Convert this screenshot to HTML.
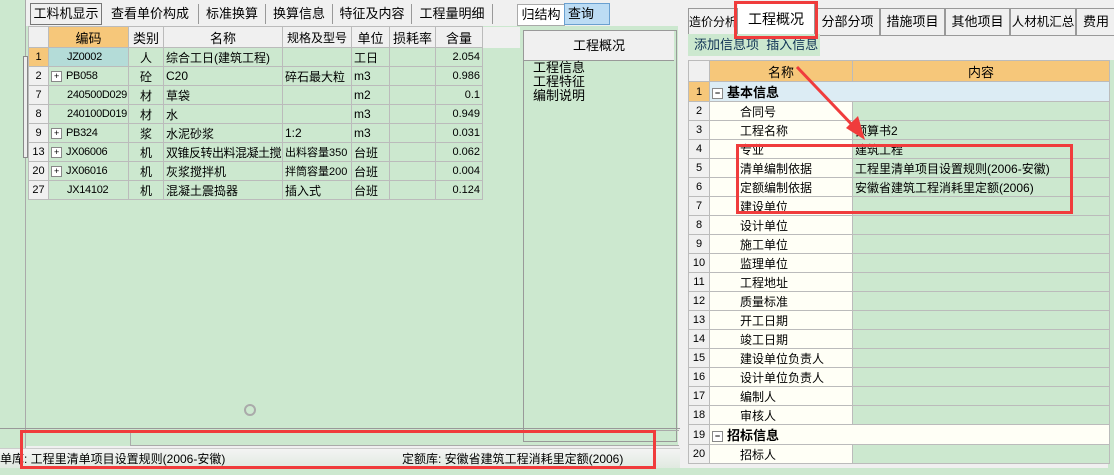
<!DOCTYPE html><html><head><meta charset="utf-8"><style>
body{margin:0;width:1114px;height:475px;overflow:hidden;background:#f0f0f0;font-family:"Liberation Sans","Noto Sans CJK SC",sans-serif;font-size:12px;position:relative}
.a{position:absolute}
.g{background:#cce8cf}
.tab{position:absolute;top:4px;height:20px;line-height:20px;font-size:13px;text-align:center;border-right:1px solid #999;background:#f0f0f0;white-space:nowrap;overflow:hidden}
table{border-collapse:collapse;position:absolute;table-layout:fixed}
td{border:1px solid #bbb;height:18px;padding:0 2px;white-space:nowrap;overflow:hidden;font-size:12px}
.hd td{background:#f0f0f0;text-align:center;height:20px;font-size:13px}
.n{background:#f0f0f0;text-align:center;font-size:11px}
.r{text-align:right;font-size:11px}
.c{font-size:11px;letter-spacing:-0.3px}
.pl{display:inline-block;width:9px;height:9px;border:1px solid #888;font-size:9px;line-height:9px;text-align:center;background:#fff;margin-right:4px;vertical-align:middle}
.rb{position:absolute;border:3px solid #f03c3c}
</style></head><body>
<div class="a g" style="left:0;top:0;width:25px;height:475px;border-right:1px solid #aaa"></div>
<div class="a g" style="left:26px;top:26px;width:494px;height:420px"></div>
<div class="tab" style="left:30px;width:70px;border:1px solid #777;top:3px">工料机显示</div>
<div class="tab" style="left:102px;width:96px">查看单价构成</div>
<div class="tab" style="left:199px;width:66px">标准换算</div>
<div class="tab" style="left:266px;width:66px">换算信息</div>
<div class="tab" style="left:333px;width:78px">特征及内容</div>
<div class="tab" style="left:412px;width:80px">工程量明细</div>
<table style="left:28px;top:26px;width:492px">
<colgroup><col style="width:20px"><col style="width:80px"><col style="width:35px"><col style="width:119px"><col style="width:69px"><col style="width:38px"><col style="width:46px"><col style="width:47px"><col style="width:38px"></colgroup>
<tr class="hd"><td></td><td style="background:#f6c77a">编码</td><td>类别</td><td>名称</td><td style="font-size:12px">规格及型号</td><td>单位</td><td>损耗率</td><td>含量</td><td style="border:none;background:#f0f0f0"></td></tr>
<tr class="g"><td class="n" style="background:#f6c77a">1</td><td class="c" style="background:#b4dcd8;padding-left:18px">JZ0002</td><td style="text-align:center">人</td><td>综合工日(建筑工程)</td><td></td><td>工日</td><td></td><td class="r">2.054</td><td style="border:none"></td></tr>
<tr class="g"><td class="n">2</td><td class="c"><span class="pl">+</span>PB058</td><td style="text-align:center">砼</td><td>C20</td><td>碎石最大粒</td><td>m3</td><td></td><td class="r">0.986</td><td style="border:none"></td></tr>
<tr class="g"><td class="n">7</td><td class="c" style="padding-left:18px">240500D029</td><td style="text-align:center">材</td><td>草袋</td><td></td><td>m2</td><td></td><td class="r">0.1</td><td style="border:none"></td></tr>
<tr class="g"><td class="n">8</td><td class="c" style="padding-left:18px">240100D019</td><td style="text-align:center">材</td><td>水</td><td></td><td>m3</td><td></td><td class="r">0.949</td><td style="border:none"></td></tr>
<tr class="g"><td class="n">9</td><td class="c"><span class="pl">+</span>PB324</td><td style="text-align:center">浆</td><td>水泥砂浆</td><td>1:2</td><td>m3</td><td></td><td class="r">0.031</td><td style="border:none"></td></tr>
<tr class="g"><td class="n">13</td><td class="c"><span class="pl">+</span>JX06006</td><td style="text-align:center">机</td><td style="letter-spacing:-0.5px">双锥反转出料混凝土搅</td><td style="font-size:11px">出料容量350</td><td>台班</td><td></td><td class="r">0.062</td><td style="border:none"></td></tr>
<tr class="g"><td class="n">20</td><td class="c"><span class="pl">+</span>JX06016</td><td style="text-align:center">机</td><td>灰浆搅拌机</td><td style="font-size:11px">拌筒容量200</td><td>台班</td><td></td><td class="r">0.004</td><td style="border:none"></td></tr>
<tr class="g"><td class="n">27</td><td class="c" style="padding-left:18px">JX14102</td><td style="text-align:center">机</td><td>混凝土震捣器</td><td>插入式</td><td>台班</td><td></td><td class="r">0.124</td><td style="border:none"></td></tr>
</table>
<div class="a" style="left:23px;top:56px;width:3px;height:100px;border:1px solid #888;background:#eee"></div>
<div class="a g" style="left:520px;top:26px;width:158px;height:420px"></div>
<div class="tab" style="left:517px;width:46px;background:#fff;border:1px solid #aaa">归结构</div>
<div class="tab" style="left:564px;top:3px;width:41px;background:#bcdcf4;border:1px solid #6aa0d0;text-align:left;padding-left:3px">查询</div>
<div class="a" style="left:523px;top:30px;width:152px;height:410px;border:1px solid #999;background:#cce8cf"></div>
<div class="a" style="left:524px;top:31px;width:150px;height:29px;line-height:29px;text-align:center;font-size:13px;background:#f0f0f0;border-bottom:1px solid #999">工程概况</div>
<div class="a" style="left:533px;top:61px;line-height:14px;font-size:13px">工程信息<br>工程特征<br>编制说明</div>
<div class="a" style="left:0;top:428px;width:680px;height:2px;border-top:1px solid #999"></div>
<div class="a" style="left:130px;top:430px;width:548px;height:14px;border:1px solid #aaa;border-right:none"></div>
<div class="a" style="left:0;top:448px;width:680px;height:20px;background:linear-gradient(#f4f4f4,#dfe9df);border-top:1px solid #ccc;line-height:20px;font-size:12px">单库: 工程里清单项目设置规则(2006-安徽)<span style="position:absolute;left:402px">定额库: 安徽省建筑工程消耗里定额(2006)</span></div>
<div class="a g" style="left:0;top:468px;width:680px;height:7px"></div>
<div class="a" style="left:244px;top:404px;width:8px;height:8px;border:2px solid #aaa;border-radius:50%"></div>
<div class="a" style="left:680px;top:0;width:434px;height:475px;background:#f0f0f0"></div>
<div class="tab" style="left:688px;top:8px;width:48px;height:26px;line-height:26px;border:1px solid #999;font-size:12px">造价分析</div>
<div class="tab" style="left:738px;top:4px;width:76px;height:30px;line-height:30px;background:#fff;font-size:14px">工程概况</div>
<div class="tab" style="left:815px;top:8px;width:63px;height:26px;line-height:26px;border:1px solid #999">分部分项</div>
<div class="tab" style="left:880px;top:8px;width:63px;height:26px;line-height:26px;border:1px solid #999">措施项目</div>
<div class="tab" style="left:945px;top:8px;width:63px;height:26px;line-height:26px;border:1px solid #999">其他项目</div>
<div class="tab" style="left:1010px;top:8px;width:64px;height:26px;line-height:26px;border:1px solid #999;font-size:12.5px">人材机汇总</div>
<div class="tab" style="left:1076px;top:8px;width:40px;height:26px;line-height:26px;border:1px solid #999;text-align:left;padding-left:6px">费用</div>
<div class="a g" style="left:688px;top:34px;width:126px;height:22px;line-height:22px;color:#135;font-size:13px;padding-left:6px">添加信息项 &nbsp;插入信息项</div>
<div class="a g" style="left:1108px;top:60px;width:6px;height:415px"></div>
<table style="left:688px;top:60px;width:421px;font-size:12px">
<colgroup><col style="width:21px"><col style="width:143px"><col style="width:257px"></colgroup>
<tr class="hd"><td></td><td style="background:#f6c77a">名称</td><td style="background:#f6c77a">内容</td></tr>
<tr><td class="n" style="background:#f6c77a">1</td><td colspan="2" style="background:#dcecf4;font-weight:bold;font-size:13px"><span class="pl">−</span>基本信息</td></tr>
<tr><td class="n">2</td><td style="background:#fffff6;padding-left:30px">合同号</td><td class="g"></td></tr>
<tr><td class="n">3</td><td style="background:#fffff6;padding-left:30px">工程名称</td><td class="g">预算书2</td></tr>
<tr><td class="n">4</td><td style="background:#fffff6;padding-left:30px">专业</td><td class="g">建筑工程</td></tr>
<tr><td class="n">5</td><td style="background:#fffff6;padding-left:30px">清单编制依据</td><td class="g">工程里清单项目设置规则(2006-安徽)</td></tr>
<tr><td class="n">6</td><td style="background:#fffff6;padding-left:30px">定额编制依据</td><td class="g">安徽省建筑工程消耗里定额(2006)</td></tr>
<tr><td class="n">7</td><td style="background:#fffff6;padding-left:30px">建设单位</td><td class="g"></td></tr>
<tr><td class="n">8</td><td style="background:#fffff6;padding-left:30px">设计单位</td><td class="g"></td></tr>
<tr><td class="n">9</td><td style="background:#fffff6;padding-left:30px">施工单位</td><td class="g"></td></tr>
<tr><td class="n">10</td><td style="background:#fffff6;padding-left:30px">监理单位</td><td class="g"></td></tr>
<tr><td class="n">11</td><td style="background:#fffff6;padding-left:30px">工程地址</td><td class="g"></td></tr>
<tr><td class="n">12</td><td style="background:#fffff6;padding-left:30px">质量标准</td><td class="g"></td></tr>
<tr><td class="n">13</td><td style="background:#fffff6;padding-left:30px">开工日期</td><td class="g"></td></tr>
<tr><td class="n">14</td><td style="background:#fffff6;padding-left:30px">竣工日期</td><td class="g"></td></tr>
<tr><td class="n">15</td><td style="background:#fffff6;padding-left:30px">建设单位负责人</td><td class="g"></td></tr>
<tr><td class="n">16</td><td style="background:#fffff6;padding-left:30px">设计单位负责人</td><td class="g"></td></tr>
<tr><td class="n">17</td><td style="background:#fffff6;padding-left:30px">编制人</td><td class="g"></td></tr>
<tr><td class="n">18</td><td style="background:#fffff6;padding-left:30px">审核人</td><td class="g"></td></tr>
<tr><td class="n">19</td><td colspan="2" style="background:#fffff6;font-weight:bold;font-size:13px"><span class="pl">−</span>招标信息</td></tr>
<tr><td class="n">20</td><td style="background:#fffff6;padding-left:30px">招标人</td><td class="g"></td></tr>
</table>
<div class="a g" style="left:680px;top:468px;width:434px;height:7px"></div>
<div class="rb" style="left:734px;top:1px;width:78px;height:32px"></div>
<div class="rb" style="left:736px;top:144px;width:331px;height:64px"></div>
<div class="rb" style="left:20px;top:430px;width:630px;height:33px"></div>
<svg class="a" style="left:680px;top:0" width="434" height="200"><line x1="117" y1="67" x2="177" y2="130" stroke="#f03c3c" stroke-width="3"/><polygon points="185,140 166,128 178,116" fill="#f03c3c"/></svg>
</body></html>
